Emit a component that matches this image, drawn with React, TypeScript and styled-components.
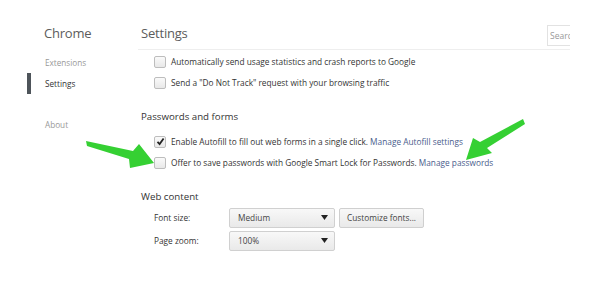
import React from "react";
import styled, { createGlobalStyle } from "styled-components";

const Global = createGlobalStyle`
  html, body { margin: 0; padding: 0; background: #fff; }
  body { font-family: "Open Sans", "Noto Sans", sans-serif; color: #333; }
`;

const Page = styled.div`
  position: relative;
  width: 600px;
  height: 301px;
  overflow: hidden;
  display: flex;
  background: #fff;
`;

const Nav = styled.nav`
  width: 138px;
  padding-top: 22px;
  display: flex;
  flex-direction: column;
`;

const NavTitle = styled.div`
  font-size: 13px;
  letter-spacing: -0.2px;
  color: #5c5c5c;
  padding-left: 44px;
  height: 22px;
  line-height: 22px;
  margin-bottom: 8px;
`;

const NavItem = styled.div<{ $active?: boolean; $gap?: number }>`
  position: relative;
  font-size: 8.2px;
  color: ${(p) => (p.$active ? "#333" : "#999")};
  padding-left: 45px;
  height: 21px;
  line-height: 21px;
  margin-top: ${(p) => p.$gap ?? 0}px;
  &::before {
    content: "";
    display: ${(p) => (p.$active ? "block" : "none")};
    position: absolute;
    left: 27px;
    top: 0;
    width: 4px;
    height: 21px;
    background: #4e545a;
  }
`;

const Main = styled.main`
  flex: 1;
  padding-top: 22px;
  display: flex;
  flex-direction: column;
`;

const Header = styled.header`
  display: flex;
  align-items: flex-start;
  justify-content: space-between;
  height: 27px;
  padding-left: 3px;
  margin-right: 30px;
  border-bottom: 1px solid #eeeeee;
`;

const HeaderTitle = styled.h1`
  margin: 0;
  font-weight: normal;
  font-size: 13px;
  letter-spacing: -0.2px;
  color: #5c5c5c;
  line-height: 22px;
`;

const Search = styled.div`
  width: 22px;
  height: 19px;
  margin-top: 3px;
  border: 1px solid #e2e2e2;
  border-right: none;
  overflow: hidden;
  display: flex;
  align-items: center;
`;

const SearchInput = styled.input`
  width: 40px;
  height: 12px;
  line-height: 12px;
  border: none;
  padding: 0 0 0 2px;
  margin: 0;
  font-family: inherit;
  font-size: 8.5px;
  color: #999;
  background: transparent;
  outline: none;
  &::placeholder { color: #999; }
`;

const Section = styled.section<{ $top?: number }>`
  display: flex;
  flex-direction: column;
  margin-top: ${(p) => p.$top ?? 0}px;
`;

const SectionTitle = styled.h2<{ $after: number }>`
  margin: 0 0 ${(p) => p.$after}px 3px;
  font-weight: normal;
  font-size: 9.7px;
  color: #333;
  line-height: 16px;
`;

const Row = styled.label`
  display: flex;
  align-items: center;
  padding-left: 16px;
  height: 21px;
  font-size: 8.3px;
  color: #333;
  white-space: nowrap;
`;

const RowText = styled.span`
  margin-left: 5px;
`;

const Box = styled.span`
  width: 10px;
  height: 10px;
  border: 1px solid #bdbdbd;
  border-radius: 2px;
  background: linear-gradient(#fafafa, #e8e8e8);
  display: flex;
  align-items: center;
  justify-content: center;
  flex: none;
`;

const Link = styled.span`
  color: #4a5d8c;
`;

const FieldRow = styled.div`
  display: flex;
  align-items: center;
  padding-left: 16px;
  height: 23px;
  font-size: 8.3px;
  color: #333;
`;

const FieldLabel = styled.span`
  width: 75px;
`;

const Select = styled.div`
  width: 90px;
  height: 18px;
  border: 1px solid #d0d0d0;
  border-radius: 2px;
  background: linear-gradient(#f8f8f8, #e9e9e9);
  display: flex;
  align-items: center;
  justify-content: space-between;
  padding: 0 6px 0 8px;
  font-size: 8.3px;
  color: #444;
`;

const Button = styled.div`
  margin-left: 4px;
  height: 18px;
  border: 1px solid #cfcfcf;
  border-radius: 2px;
  background: linear-gradient(#f8f8f8, #e9e9e9);
  padding: 0 7px;
  display: flex;
  align-items: center;
  font-size: 8.3px;
  color: #444;
`;

const Arrow = styled.svg`
  position: absolute;
  left: 0;
  top: 0;
  pointer-events: none;
`;

const Check = () => (
  <svg width="9" height="9" viewBox="0 0 9 9">
    <path d="M1.5 4.8 L3.6 7 L7.6 1.4" fill="none" stroke="#222" strokeWidth="1.8" />
  </svg>
);

const Caret = () => (
  <svg width="7" height="5" viewBox="0 0 7 5">
    <path d="M0 0 H7 L3.5 5 Z" fill="#222" />
  </svg>
);

export default function App() {
  return (
    <>
      <Global />
      <Page>
        <Nav>
          <NavTitle>Chrome</NavTitle>
          <NavItem>Extensions</NavItem>
          <NavItem $active>Settings</NavItem>
          <NavItem $gap={20}>About</NavItem>
        </Nav>
        <Main>
          <Header>
            <HeaderTitle>Settings</HeaderTitle>
            <Search>
              <SearchInput placeholder="Search" />
            </Search>
          </Header>
          <Section $top={1}>
            <Row>
              <Box />
              <RowText>Automatically send usage statistics and crash reports to Google</RowText>
            </Row>
            <Row>
              <Box />
              <RowText>Send a "Do Not Track" request with your browsing traffic</RowText>
            </Row>
          </Section>
          <Section $top={16}>
            <SectionTitle $after={6}>Passwords and forms</SectionTitle>
            <Row>
              <Box>
                <Check />
              </Box>
              <RowText>
                Enable Autofill to fill out web forms in a single click. <Link>Manage Autofill settings</Link>
              </RowText>
            </Row>
            <Row>
              <Box />
              <RowText>
                Offer to save passwords with Google Smart Lock for Passwords. <Link>Manage passwords</Link>
              </RowText>
            </Row>
          </Section>
          <Section $top={16}>
            <SectionTitle $after={1}>Web content</SectionTitle>
            <FieldRow>
              <FieldLabel>Font size:</FieldLabel>
              <Select>
                Medium
                <Caret />
              </Select>
              <Button>Customize fonts...</Button>
            </FieldRow>
            <FieldRow>
              <FieldLabel>Page zoom:</FieldLabel>
              <Select>
                100%
                <Caret />
              </Select>
            </FieldRow>
          </Section>
        </Main>
        <Arrow width="600" height="301" viewBox="0 0 600 301">
          <polygon
            points="86,141 133,151 139,144 154,163 130,168 129,159 87,146"
            fill="#35d033"
          />
          <polygon
            points="523,119 525,124 487,148 492,153 466,160 473,138 480,142"
            fill="#35d033"
          />
        </Arrow>
      </Page>
    </>
  );
}
